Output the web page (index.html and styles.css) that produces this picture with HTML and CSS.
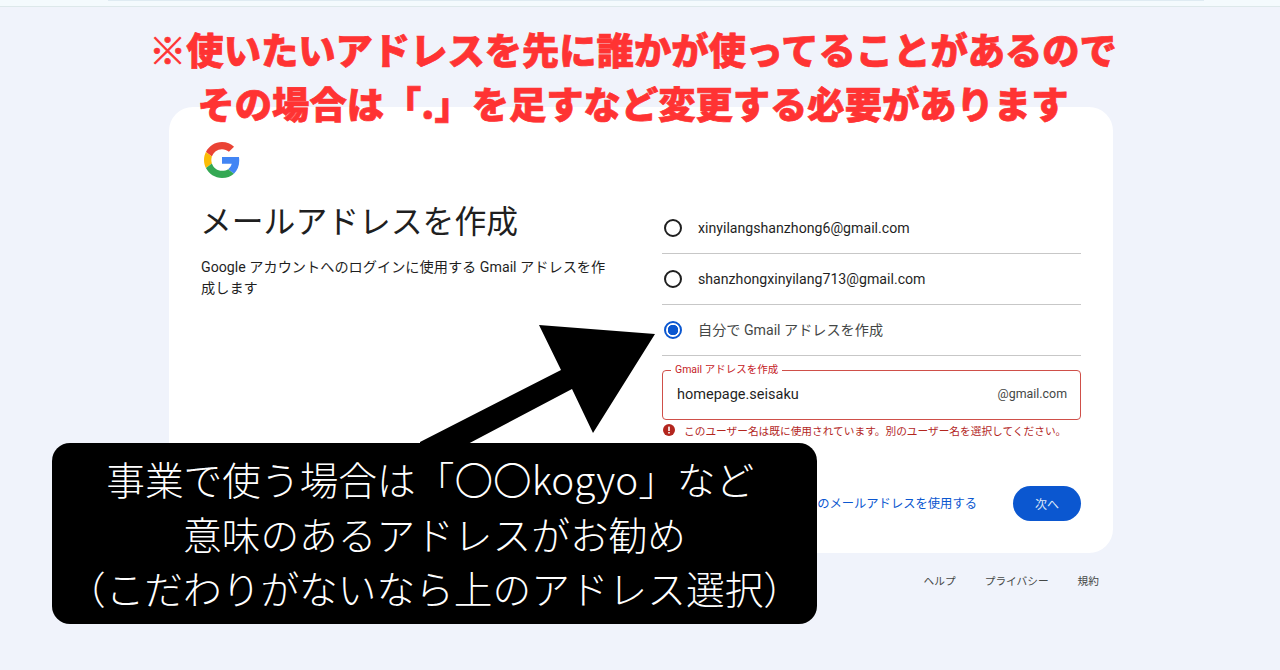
FILE: index.html
```html
<!DOCTYPE html>
<html lang="ja">
<head>
<meta charset="utf-8">
<title>メールアドレスを作成</title>
<link rel="stylesheet" href="styles.css">
</head>
<body>
<div class="topbar"><div class="topbar-fill"></div></div>
<main class="page">
  <section class="card">
    <svg class="logo" viewBox="0 0 48 48" aria-label="Google">
      <path fill="#EA4335" d="M24 9.5c3.54 0 6.71 1.22 9.21 3.6l6.85-6.85C35.9 2.38 30.47 0 24 0 14.62 0 6.51 5.38 2.56 13.22l7.98 6.19C12.43 13.72 17.74 9.5 24 9.5z"/>
      <path fill="#4285F4" d="M46.98 24.55c0-1.57-.15-3.09-.38-4.55H24v9.02h12.94c-.58 2.96-2.26 5.48-4.78 7.18l7.73 6c4.51-4.18 7.09-10.36 7.09-17.65z"/>
      <path fill="#FBBC05" d="M10.53 28.59c-.48-1.45-.76-2.99-.76-4.59s.27-3.14.76-4.59l-7.98-6.19C.92 16.46 0 20.12 0 24c0 3.88.92 7.54 2.56 10.78l7.97-6.19z"/>
      <path fill="#34A853" d="M24 48c6.48 0 11.93-2.13 15.89-5.81l-7.73-6c-2.15 1.45-4.92 2.3-8.16 2.3-6.26 0-11.57-4.22-13.47-9.91l-7.98 6.19C6.51 42.62 14.62 48 24 48z"/>
    </svg>
    <div class="columns">
      <div class="intro">
        <h1 class="heading">メールアドレスを作成</h1>
        <p class="lead">Google アカウントへのログインに使用する Gmail アドレスを作成します</p>
      </div>
      <div class="form">
        <div class="option"><span class="radio"></span><span>xinyilangshanzhong6@gmail.com</span></div>
        <div class="option"><span class="radio"></span><span>shanzhongxinyilang713@gmail.com</span></div>
        <div class="option"><span class="radio radio-on"></span><span class="option-own">自分で Gmail アドレスを作成</span></div>
        <div class="field">
          <span class="field-label">Gmail アドレスを作成</span>
          <span class="field-value">homepage.seisaku</span>
          <span class="field-suffix">@gmail.com</span>
        </div>
        <div class="error">
          <svg class="error-icon" viewBox="0 0 12 12"><circle cx="6" cy="6" r="6" fill="#b3261e"/><rect x="5.2" y="2.6" width="1.6" height="4.4" fill="#fff"/><rect x="5.2" y="8" width="1.6" height="1.5" fill="#fff"/></svg>
          <span>このユーザー名は既に使用されています。別のユーザー名を選択してください。</span>
        </div>
        <div class="actions">
          <span class="link">既存のメールアドレスを使用する</span>
          <span class="next">次へ</span>
        </div>
      </div>
    </div>
  </section>
  <footer class="foot">
    <span>ヘルプ</span><span>プライバシー</span><span>規約</span>
  </footer>
</main>

<div class="notice">※使いたいアドレスを先に誰かが使ってることがあるので<br>その場合は「.」を足すなど変更する必要があります</div>
<svg class="arrow" viewBox="0 0 1280 670"><polygon points="655,334 539,325 561,370 420,442 420,446 464,446 572,389 593,433"/></svg>
<div class="callout">事業で使う場合は「〇〇kogyo」など&nbsp;<br>意味のあるアドレスがお勧め<br>（こだわりがないなら上のアドレス選択）</div>
</body>
</html>
```
FILE: styles.css
```css
* { box-sizing: border-box; }
html, body { margin: 0; height: 670px; overflow: hidden; }
body {
  position: relative;
  background: #f0f3fb;
  font-family: Roboto, "Noto Sans CJK JP", sans-serif;
  color: #1f1f1f;
}
.topbar {
  height: 7px;
  background: #f4fafd;
  border-bottom: 1px solid #dde8ea;
  padding: 0 76px 0 108px;
}
.topbar-fill { height: 1px; background: #dfebf2; }

.page { padding: 100px 167px 0 169px; }
.card {
  background: #fff;
  border-radius: 24px;
  height: 446px;
  padding: 35px 32px 0;
}
.logo { display: block; width: 36px; height: 36px; margin-left: 3px; }
.columns { display: grid; grid-template-columns: 407px 419px; column-gap: 54px; margin-top: 24px; }
.heading { margin: 0 0 0 -1px; font-size: 31.8px; line-height: 40px; font-weight: 400; }
.lead { margin: 15px 0 0; font-size: 14.2px; line-height: 21px; color: #1f1f1f; }
.form { margin-top: 1px; }

.option {
  display: flex;
  align-items: center;
  gap: 16px;
  height: 51px;
  font-size: 14.15px;
  padding-left: 2px;
  border-bottom: 1.5px solid #c7c7c7;
}
.radio {
  width: 18px;
  height: 18px;
  flex: none;
  border: 2px solid #1f1f1f;
  border-radius: 50%;
}
.radio-on {
  border-color: #0b57d0;
  background: radial-gradient(circle, #0b57d0 0 5px, #fff 5.5px);
}
.option-own { color: #444746; font-size: 14.15px; margin-top: -3px; }

.field {
  position: relative;
  display: flex;
  justify-content: space-between;
  align-items: center;
  height: 50px;
  margin-top: 14px;
  padding: 0 13px 0 14px;
  border: 1px solid #cf4f49;
  border-radius: 4px;
}
.field-label {
  position: absolute;
  left: 8px;
  top: -7px;
  padding: 0 4px;
  background: #fff;
  font-size: 10.5px;
  line-height: 12px;
  color: #c5221f;
}
.field-value { font-size: 14.5px; margin-top: -1px; }
.field-suffix { font-size: 12.4px; color: #444746; margin-top: -4px; }

.error {
  display: flex;
  align-items: center;
  gap: 9px;
  height: 20px;
  font-size: 10.7px;
  color: #b3261e;
}
.error-icon { width: 12px; height: 12px; margin-left: 1px; flex: none; }

.actions {
  display: flex;
  justify-content: flex-end;
  align-items: center;
  gap: 36px;
  margin-top: 46px;
}
.link { font-size: 12.3px; color: #0b57d0; margin-top: -2px; }
.next {
  display: flex;
  align-items: center;
  justify-content: center;
  width: 68px;
  height: 35px;
  border-radius: 18px;
  background: #0b57d0;
  color: #dbe6f8;
  font-size: 12px;
}

.foot {
  display: flex;
  justify-content: flex-end;
  gap: 29px;
  padding: 22px 14px 0 0;
  font-size: 10.7px;
  line-height: 14px;
  color: #444746;
}

.notice {
  position: absolute;
  left: 0;
  top: 22px;
  width: 1266px;
  text-align: center;
  font-size: 37.3px;
  line-height: 54px;
  font-weight: 900;
  color: #ff3333;
  -webkit-text-stroke: 0.7px #ff3333;
  font-family: "Noto Sans CJK JP", sans-serif;
}
.arrow { position: absolute; left: 0; top: 0; width: 1280px; height: 670px; }
.arrow polygon { fill: #000; }
.callout {
  position: absolute;
  left: 52px;
  top: 443px;
  width: 765px;
  height: 181px;
  padding-top: 8px;
  background: #000;
  border-radius: 18px;
  color: #fff;
  text-align: center;
  font-size: 38.7px;
  line-height: 54.5px;
  font-weight: 300;
  font-family: "Noto Sans CJK JP", sans-serif;
}
```
